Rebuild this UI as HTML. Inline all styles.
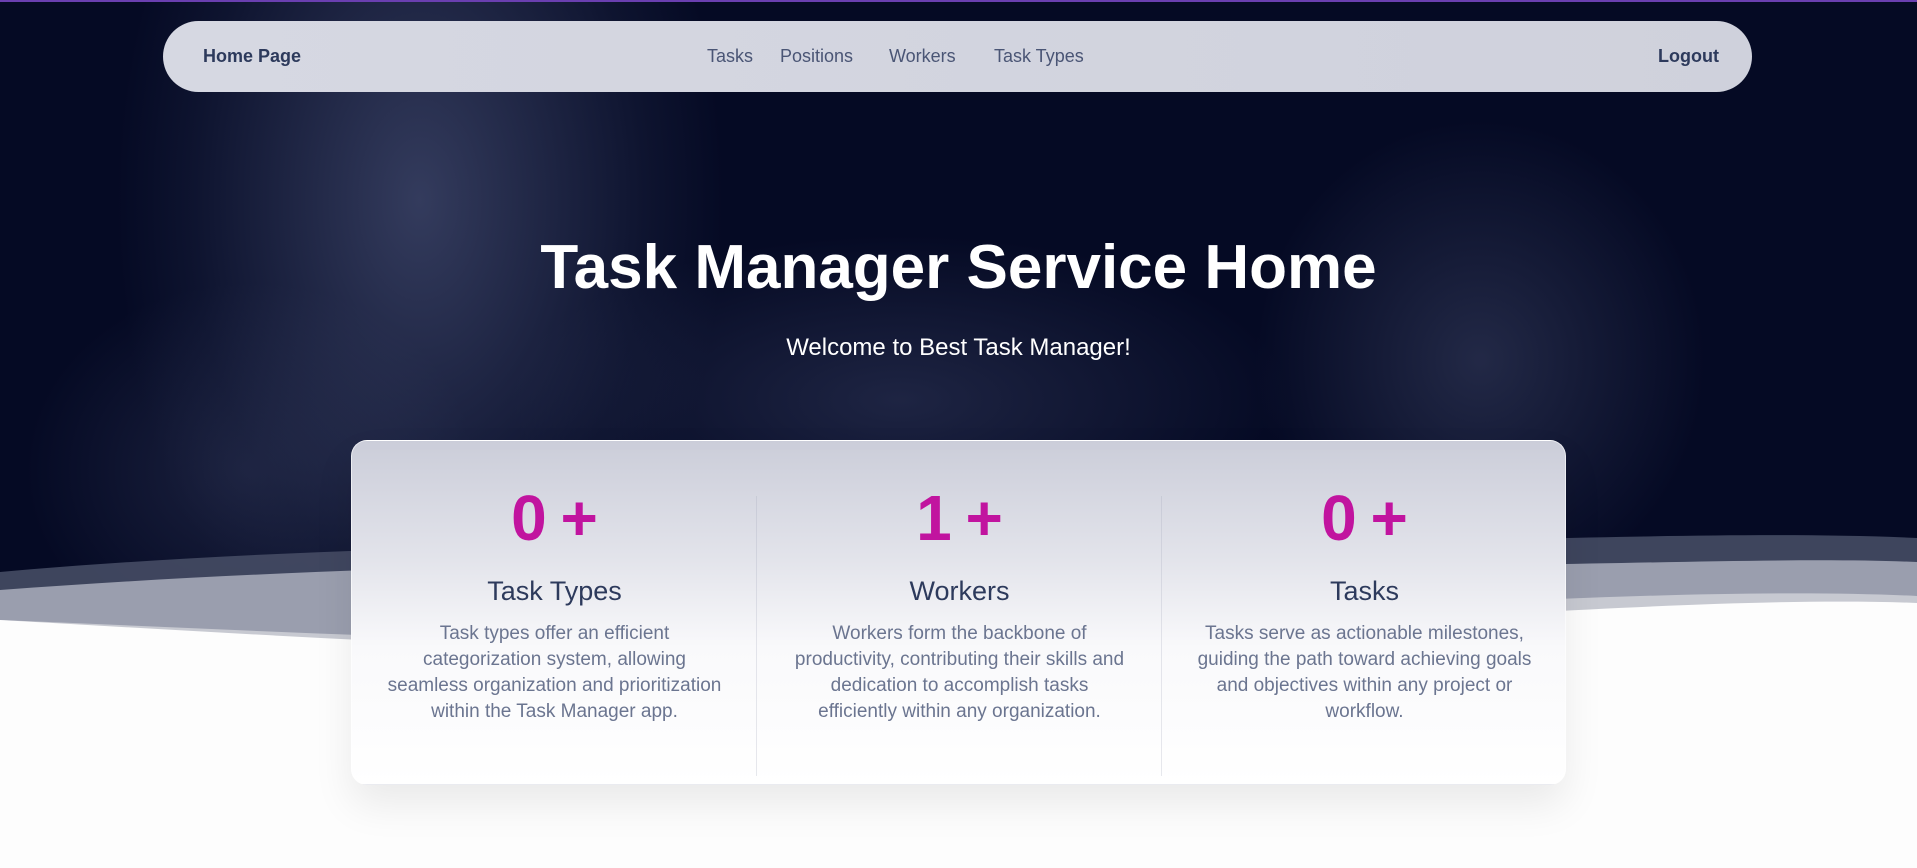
<!DOCTYPE html>
<html><head><meta charset="utf-8"><style>
*{margin:0;padding:0;box-sizing:border-box}
body{width:1917px;height:868px;overflow:hidden;background:#fff;font-family:"Liberation Sans","DejaVu Sans",sans-serif;position:relative}
.bg{position:absolute;left:0;top:0;width:1917px;height:868px;background:
radial-gradient(ellipse 380px 620px at 420px 200px,rgba(90,100,140,.55),rgba(40,48,80,.25) 60%,transparent 80%),
radial-gradient(ellipse 300px 320px at 1480px 360px,rgba(70,78,112,.45),transparent 75%),
radial-gradient(ellipse 520px 220px at 900px 400px,rgba(60,68,104,.45),transparent 75%),
radial-gradient(ellipse 300px 250px at 250px 470px,rgba(55,62,95,.45),transparent 75%),
#050a24}
.topline{position:absolute;left:0;top:0;width:100%;height:2px;background:#6a3fb0}
nav{position:absolute;left:163px;top:21px;width:1589px;height:71px;border-radius:36px;background:linear-gradient(90deg,#d6d8e2,#cfd1dc);}
nav a{position:absolute;top:25px;font-size:18px;color:#4a5575;text-decoration:none}
nav a.b{font-weight:bold;color:#2d3a5c}
h1{position:absolute;left:0;width:1917px;top:232px;text-align:center;color:#fff;font-size:62px;font-weight:bold}
.sub{position:absolute;left:0;width:1917px;top:334px;text-align:center;color:#fff;font-size:24px}
.card{position:absolute;left:351px;top:440px;width:1215px;height:345px;border-radius:16px;background:linear-gradient(180deg,#cbcdd9 0%,#e3e4eb 35%,#f9f9fb 60%,#fff 100%);box-shadow:0 20px 40px rgba(0,0,0,.08);border:1px solid rgba(255,255,255,.6)}
.col{position:absolute;top:0;width:405px;height:100%;text-align:center}
.div{position:absolute;top:55px;width:1px;height:280px;background:rgba(160,165,185,.25)}
.num{position:absolute;top:40px;width:100%;font-size:64px;font-weight:bold;color:#c1149f;word-spacing:-4px}
.h{position:absolute;top:135px;width:100%;font-size:27px;color:#2d3a5c}
.p{position:absolute;top:180px;left:34px;right:34px;font-size:19px;line-height:26px;color:#6b7590}
</style></head><body>
<div class="bg"></div>
<svg style="position:absolute;left:0;top:0" width="1917" height="868">
<path d="M0 572 C300 545 700 540 1000 545 C1400 548 1700 528 1917 538 L1917 868 L0 868Z" fill="#454b64" opacity=".9"/>
<path d="M0 590 C400 560 800 560 1100 565 C1500 572 1750 555 1917 562 L1917 868 L0 868Z" fill="#9a9eae"/>
<path d="M0 620 C300 632 600 650 900 640 C1300 610 1700 585 1917 596 L1917 868 L0 868Z" fill="#c7c9d1"/>
<path d="M0 620 C300 637 600 657 900 650 C1300 630 1700 594 1917 603 L1917 868 L0 868Z" fill="#fdfdfd"/>
</svg>
<div class="topline"></div>
<nav>
<a class="b" style="left:40px">Home Page</a>
<a style="left:544px">Tasks</a>
<a style="left:617px">Positions</a>
<a style="left:726px">Workers</a>
<a style="left:831px">Task Types</a>
<a class="b" style="left:1495px">Logout</a>
</nav>
<h1>Task Manager Service Home</h1>
<div class="sub">Welcome to Best Task Manager!</div>
<div class="card">
<div class="col" style="left:0"><div class="num">0 +</div><div class="h">Task Types</div><div class="p">Task types offer an efficient categorization system, allowing seamless organization and prioritization within the Task Manager app.</div></div>
<div class="div" style="left:404px"></div>
<div class="col" style="left:405px"><div class="num">1 +</div><div class="h">Workers</div><div class="p">Workers form the backbone of productivity, contributing their skills and dedication to accomplish tasks efficiently within any organization.</div></div>
<div class="div" style="left:809px"></div>
<div class="col" style="left:810px"><div class="num">0 +</div><div class="h">Tasks</div><div class="p">Tasks serve as actionable milestones, guiding the path toward achieving goals and objectives within any project or workflow.</div></div>
</div>
</body></html>
